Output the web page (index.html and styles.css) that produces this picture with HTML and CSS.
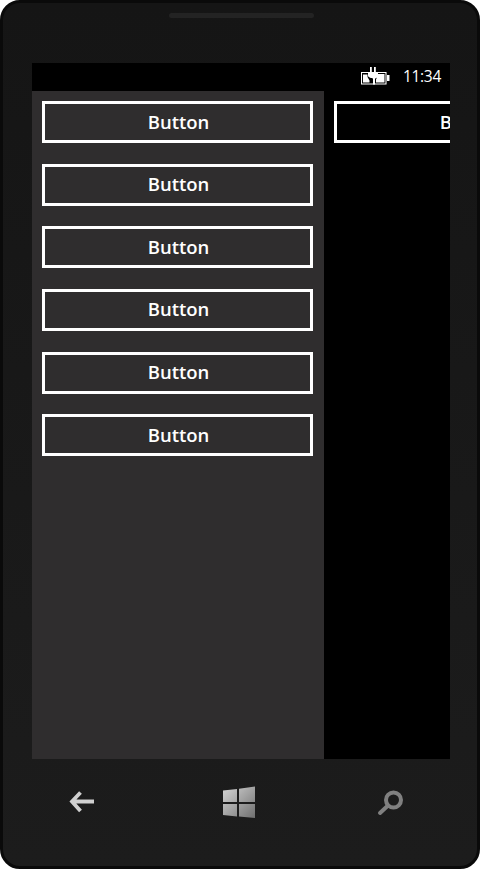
FILE: index.html
```html
<!DOCTYPE html>
<html lang="en">
<head>
    <meta charset="UTF-8">
    <meta name="viewport" content="width=device-width, initial-scale=1.0">
    <title>Phone Emulator</title>
    <link rel="stylesheet" href="styles.css">
</head>
<body>
    <div class="phone">
        <div class="phone-top">
            <div class="speaker"></div>
        </div>
        <div class="screen">
            <div class="status-bar">
                <svg class="battery" width="29" height="18" viewBox="0 0 29 18">
                    <path d="M7 5.500H.5v11.500h24.500V5.500H16" fill="none" stroke="#fff" stroke-width="1.100"/>
                    <path d="M2 15.500V7.500h4.500v2.500l2 3.500v2zM23.500 15.500V7H16v3.500l-1 2v3z" fill="#fff"/>
                    <rect x="26" y="8" width="2.500" height="6" fill="#fff"/>
                    <path d="M7 5h2V0h1.800v5h2.200V0h1.800v5H17v3.500c0 1.800-1.400 2.700-3 3V17.500h-2v-6c-1.600-.3-5-1.200-5-3z" fill="#fff"/>
                </svg>
                <span class="clock">11:34</span>
            </div>
            <div class="content">
                <div class="panel">
                    <button class="btn">Button</button>
                    <button class="btn">Button</button>
                    <button class="btn">Button</button>
                    <button class="btn">Button</button>
                    <button class="btn">Button</button>
                    <button class="btn">Button</button>
                </div>
                <div class="main">
                    <button class="btn">Button</button>
                </div>
            </div>
        </div>
        <div class="nav">
            <svg class="nav-back" width="26" height="24" viewBox="0 0 26 24">
                <path d="M11.500 2.500L3 11.500l8.500 9.500M3.500 11.500H25" fill="none" stroke="#d0d0d0" stroke-width="3.800"/>
            </svg>
            <svg class="nav-home" width="32" height="32" viewBox="0 0 32 32">
                <defs>
                    <linearGradient id="winGrad" x1="0" y1="0" x2="1" y2="1">
                        <stop offset="0" stop-color="#d6d6d6"/>
                        <stop offset="1" stop-color="#6f6f6f"/>
                    </linearGradient>
                </defs>
                <path d="M0 4.500L14 3v13H0zM16 2.800L32 .5V16H16zM0 18h14v12.500L0 29zM16 18h16v14l-16-1.500z" fill="url(#winGrad)"/>
            </svg>
            <svg class="nav-search" width="28" height="28" viewBox="0 0 28 28">
                <circle cx="16.500" cy="11" r="7.500" fill="none" stroke="#808080" stroke-width="4"/>
                <path d="M10.500 17L3 24" fill="none" stroke="#808080" stroke-width="4" stroke-linecap="round"/>
            </svg>
        </div>
    </div>
</body>
</html>
```
FILE: styles.css
```css
html, body {
    margin: 0;
    padding: 0;
    background-color: #fff;
}
body {
    font-family: "Open Sans", Arial, sans-serif;
    width: 480px;
    height: 872px;
    overflow: hidden;
}
.phone {
    box-sizing: border-box;
    width: 480px;
    height: 869px;
    border: 3px solid #0a0a0a;
    border-radius: 20px;
    background: linear-gradient(#151515, #1c1c1c);
    display: flex;
    flex-direction: column;
}
.phone-top {
    height: 60px;
    flex: none;
    padding-top: 10px;
    box-sizing: border-box;
}
.speaker {
    width: 145px;
    height: 5px;
    margin-left: 166px;
    border-radius: 3px;
    background-color: #232323;
}
.screen {
    width: 418px;
    height: 696px;
    margin-left: 29px;
    flex: none;
    background-color: #000;
    overflow: hidden;
    display: flex;
    flex-direction: column;
}
.status-bar {
    height: 28px;
    flex: none;
    display: flex;
    justify-content: flex-end;
    align-items: flex-start;
    color: #fff;
    font-size: 15.500px;
    padding-right: 9px;
}
.battery {
    margin-top: 4px;
    margin-right: 13px;
}
.clock {
    line-height: 26px;
    letter-spacing: -0.3px;
}
.content {
    flex: 1;
    display: flex;
}
.panel {
    box-sizing: border-box;
    width: 292px;
    flex: none;
    padding: 10px 11px 0 10px;
    background-color: #2f2d2e;
}
.main {
    padding: 10px 0 0 10px;
}
.btn {
    display: block;
    box-sizing: border-box;
    width: 271px;
    height: 42px;
    margin: 0 0 20.670px;
    padding: 0 0 2px 2px;
    border: 3px solid #fff;
    background: transparent;
    color: #fff;
    font-family: "Open Sans", Arial, sans-serif;
    font-size: 18.500px;
    font-weight: 600;
}
.nav {
    flex: 1;
    position: relative;
}
.nav svg {
    position: absolute;
}
.nav-back {
    left: 66px;
    top: 31px;
}
.nav-home {
    left: 220px;
    top: 27px;
}
.nav-search {
    left: 374px;
    top: 30px;
}
```
